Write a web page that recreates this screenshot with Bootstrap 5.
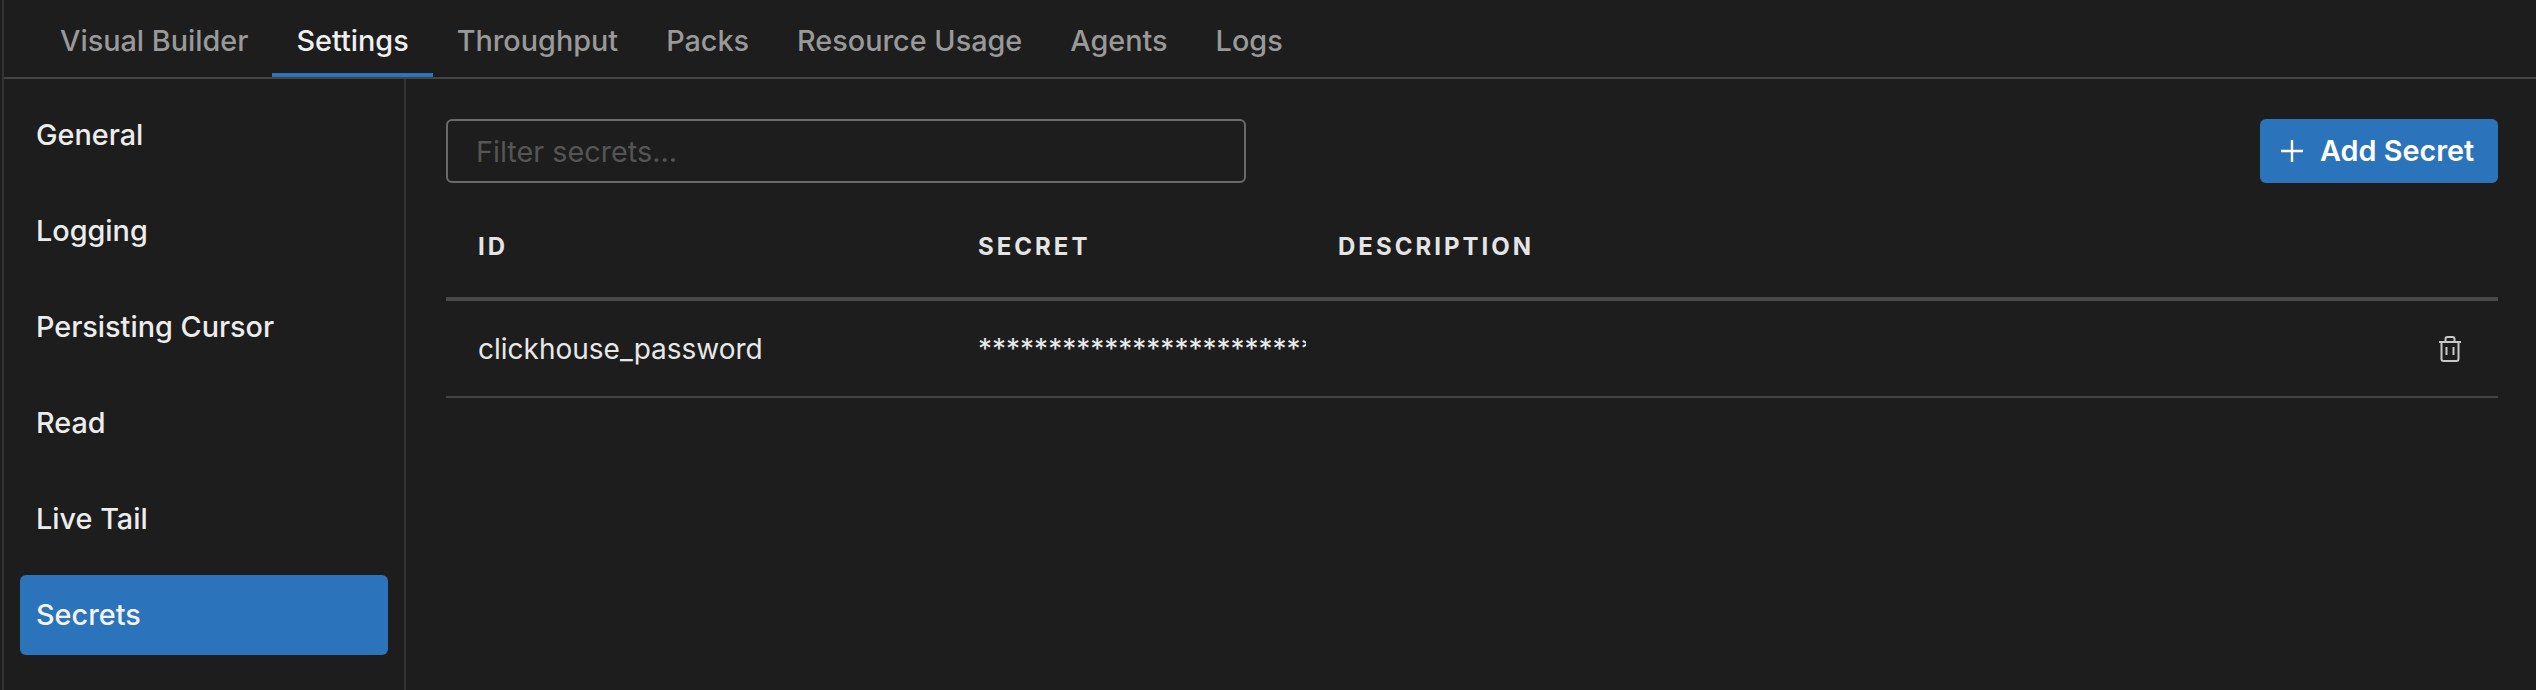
<!DOCTYPE html>
<html lang="en" data-bs-theme="dark">
  <head>
    <meta charset="UTF-8" />
    <meta name="viewport" content="width=device-width, initial-scale=1.0" />
    <title>Secrets</title>
    <link
      rel="stylesheet"
      href="https://cdn.jsdelivr.net/npm/bootstrap@5.3.3/dist/css/bootstrap.min.css"
    />
    <style>
      body {
        background: #1d1d1d;
        color: #e8e8e8;
        font-family: Inter, "Liberation Sans", sans-serif;
        overflow: hidden;
      }
      .app-shell {
        height: 690px;
        margin-left: 2px;
        border-left: 2px solid #333;
      }
      .top-tabs {
        height: 79px;
        padding-left: 32px;
        border-bottom: 2px solid #444;
        flex-wrap: nowrap;
      }
      .top-tabs .nav-link {
        height: 77px;
        padding: 23px 24px 0;
        margin: 0;
        font-size: 28.800px;
        font-weight: 500;
        line-height: 36px;
        color: #999;
        border: 0;
        border-bottom: 4px solid transparent;
        border-radius: 0;
        background: none;
      }
      .top-tabs .nav-link.active {
        color: #f0f0f0;
        background: none;
        border-bottom-color: #2b73bb;
      }
      .side-menu {
        width: 402px;
        padding: 16px 16px 0 16px;
        border-right: 2px solid #333;
        gap: 16px;
      }
      .side-menu .nav-link {
        height: 80px;
        padding: 0 16px;
        display: flex;
        align-items: center;
        font-size: 28.800px;
        font-weight: 500;
        color: #ececec;
        border-radius: 6px;
      }
      .side-menu .nav-link.active {
        background: #2b73bb;
        color: #f4f4f4;
      }
      .secrets-pane {
        padding: 40px 38px 0 40px;
      }
      .filter-box {
        width: 800px;
        height: 64px;
        padding: 0 28px;
        font-size: 28.800px;
        color: #eee;
        background: transparent;
        border: 2px solid #6a6a6a;
        border-radius: 6px;
      }
      .filter-box::placeholder {
        color: #555;
      }
      .filter-box:focus {
        background: transparent;
        color: #eee;
        border-color: #6a6a6a;
        box-shadow: none;
      }
      .add-btn {
        width: 238px;
        height: 64px;
        padding: 0 0 0 20px;
        font-size: 28.800px;
        font-weight: 600;
        color: #fff;
        background: #2b73bb;
        border: 0;
        border-radius: 6px;
      }
      .secrets-table {
        table-layout: fixed;
        width: 100%;
        margin: 0;
        --bs-table-bg: transparent;
        --bs-table-color: #e8e8e8;
      }
      .secrets-table th {
        height: 116px;
        padding: 14px 0 0 32px;
        font-size: 24px;
        font-weight: 700;
        letter-spacing: 3px;
        color: #e4e4e4;
        vertical-align: middle;
        border-bottom: 4px solid #4a4a4a;
      }
      .secrets-table td {
        height: 98px;
        padding: 0 0 0 32px;
        font-size: 28px;
        vertical-align: middle;
        border-bottom: 2px solid #444;
      }
      .secret-mask {
        font-size: 24px;
        white-space: nowrap;
        overflow: hidden;
      }
      .secret-mask span {
        display: block;
        overflow: hidden;
      }
      .trash-btn {
        display: block;
        margin-left: auto;
        margin-right: 36px;
        width: 24px;
        height: 26px;
        padding: 0;
        color: #c8c8c8;
        background: none;
        border: 0;
      }
      .trash-btn svg {
        display: block;
      }
    </style>
  </head>

  <body>
    <div class="app-shell d-flex flex-column">
      <ul class="nav nav-tabs top-tabs">
        <li class="nav-item"><a class="nav-link" href="#">Visual Builder</a></li>
        <li class="nav-item"><a class="nav-link active" href="#">Settings</a></li>
        <li class="nav-item"><a class="nav-link" href="#">Throughput</a></li>
        <li class="nav-item"><a class="nav-link" href="#">Packs</a></li>
        <li class="nav-item"><a class="nav-link" href="#">Resource Usage</a></li>
        <li class="nav-item"><a class="nav-link" href="#">Agents</a></li>
        <li class="nav-item"><a class="nav-link" href="#">Logs</a></li>
      </ul>

      <div class="d-flex flex-grow-1">
        <nav class="nav nav-pills flex-column flex-nowrap flex-shrink-0 side-menu">
          <a class="nav-link" href="#">General</a>
          <a class="nav-link" href="#">Logging</a>
          <a class="nav-link" href="#">Persisting Cursor</a>
          <a class="nav-link" href="#">Read</a>
          <a class="nav-link" href="#">Live Tail</a>
          <a class="nav-link active" href="#">Secrets</a>
        </nav>

        <section class="flex-grow-1 secrets-pane">
          <div class="d-flex justify-content-between">
            <input class="form-control filter-box" type="text" placeholder="Filter secrets..." />
            <button type="button" class="btn add-btn d-flex align-items-center justify-content-start gap-3">
              <svg width="24" height="24" viewBox="0 0 24 24" fill="none" stroke="currentColor" stroke-width="2.4">
                <path d="M12 1v22M1 12h22" />
              </svg>
              Add Secret
            </button>
          </div>

          <table class="table secrets-table">
            <colgroup>
              <col style="width: 500px" />
              <col style="width: 360px" />
              <col />
              <col style="width: 120px" />
            </colgroup>
            <thead>
              <tr>
                <th>ID</th>
                <th>SECRET</th>
                <th>DESCRIPTION</th>
                <th></th>
              </tr>
            </thead>
            <tbody>
              <tr>
                <td>clickhouse_password</td>
                <td class="secret-mask"><span>********************************</span></td>
                <td></td>
                <td>
                  <button type="button" class="trash-btn" aria-label="Delete">
                    <svg width="24" height="26" viewBox="0 0 24 26" fill="none" stroke="currentColor" stroke-width="2">
                      <path d="M1 6h22M7.500 6V3a2 2 0 0 1 2-2h5a2 2 0 0 1 2 2v3M3.500 6v17a2 2 0 0 0 2 2h13a2 2 0 0 0 2-2V6M8.500 11v8M15.500 11v8" />
                    </svg>
                  </button>
                </td>
              </tr>
            </tbody>
          </table>
        </section>
      </div>
    </div>

    <script src="https://cdn.jsdelivr.net/npm/bootstrap@5.3.3/dist/js/bootstrap.bundle.min.js"></script>
  </body>
</html>
